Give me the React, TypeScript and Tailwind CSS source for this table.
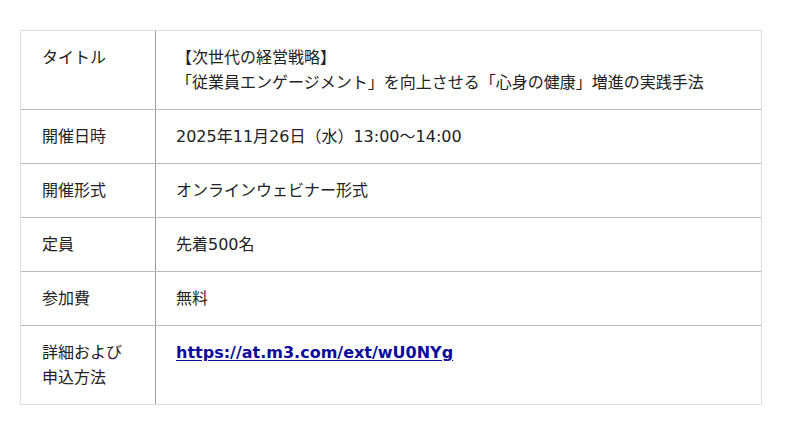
const rows: { label: React.ReactNode; value: React.ReactNode }[] = [
  {
    label: "タイトル",
    value: (
      <>
        【次世代の経営戦略】
        <br />
        「従業員エンゲージメント」を向上させる「心身の健康」増進の実践手法
      </>
    ),
  },
  { label: "開催日時", value: "2025年11月26日（水）13:00〜14:00" },
  { label: "開催形式", value: "オンラインウェビナー形式" },
  { label: "定員", value: "先着500名" },
  { label: "参加費", value: "無料" },
  {
    label: (
      <>
        詳細および
        <br />
        申込方法
      </>
    ),
    value: (
      <a href="#" className="font-bold text-[#0b0b9c] underline underline-offset-2">
        https://at.m3.com/ext/wU0NYg
      </a>
    ),
  },
];

export default function App() {
  return (
    <div
      className="min-h-[435px] bg-white pt-[30px] pl-[20px] text-[16px] leading-[25px] text-[#222]"
      style={{ fontFamily: '"DejaVu Sans", "Noto Sans CJK JP", sans-serif' }}
    >
      <div className="w-[742px] border border-[#dedede]">
        {rows.map((row, i) => (
          <div
            key={i}
            className={
              i < rows.length - 1
                ? "grid grid-cols-[135px_1fr] border-b border-[#b9b9b9]"
                : "grid grid-cols-[135px_1fr]"
            }
          >
            <div className="border-r border-[#9e9e9e] py-[14px] pl-[21px]">{row.label}</div>
            <div className="py-[14px] pl-[20px]">{row.value}</div>
          </div>
        ))}
      </div>
    </div>
  );
}
